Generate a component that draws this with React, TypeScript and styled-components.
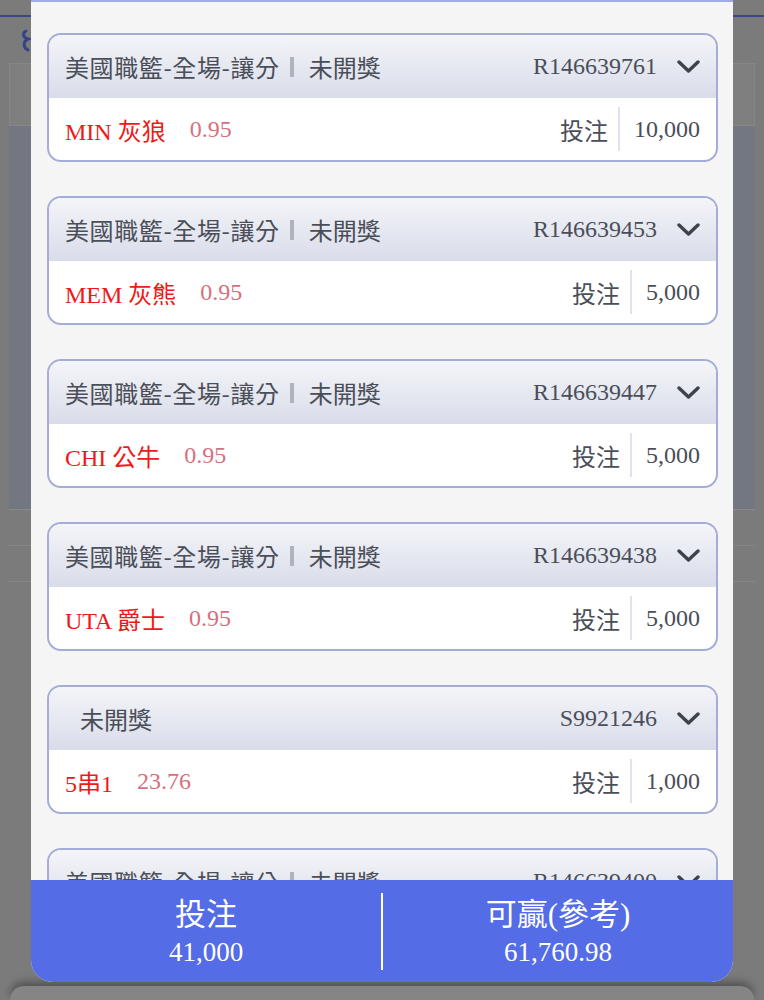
import React from 'react';
import styled, { createGlobalStyle } from 'styled-components';

const GlobalStyle = createGlobalStyle`
  html, body {
    margin: 0;
    padding: 0;
    background: #7b7b7b;
    overflow: hidden;
  }
  * { box-sizing: border-box; }
`;

const SANS = `"Noto Sans CJK TC", "Noto Sans", sans-serif`;
const SERIF = `"Liberation Serif", "Noto Sans CJK TC", serif`;

// dimmed page that sits behind the overlay
const BackPage = styled.div`
  height: 1000px;
  display: flex;
  flex-direction: column;
`;

const BackTopBar = styled.div`
  height: 17px;
  border-bottom: 2px solid #3b4784;
`;

const BackLogoRow = styled.div`
  height: 46px;
  display: flex;
  align-items: center;
  padding-left: 20px;
`;

const BackFilter = styled.div`
  margin: 0 9px;
  height: 63px;
  background: #7f7f80;
  border: 1px solid #878787;
`;

const BackPanel = styled.div`
  margin: 0 9px;
  height: 384px;
  background: #737781;
  border-bottom: 1px solid #8a8a8a;
`;

const BackRow = styled.div`
  margin: 0 9px;
  height: 36px;
  border-bottom: 1px solid #868686;
`;

const BackSpacer = styled.div`
  flex: 1;
`;

const BackSheet = styled.div`
  margin: 0 10px;
  height: 14px;
  background: #858585;
  border-radius: 22px 22px 0 0;
  box-shadow: 0 -4px 8px rgba(0, 0, 0, 0.35);
`;

// overlay modal
const Modal = styled.div`
  position: fixed;
  left: 31px;
  width: 702px;
  top: 0;
  bottom: 18px;
  background: #f5f5f5;
  border-top: 2px solid #9eace8;
  border-radius: 0 0 22px 22px;
  overflow: hidden;
  display: flex;
  flex-direction: column;
`;

const List = styled.div`
  flex: 1;
  overflow: hidden;
  padding: 31px 15px 0 16px;
  display: flex;
  flex-direction: column;
  gap: 34px;
`;

const Card = styled.div`
  flex-shrink: 0;
  border: 2px solid #a5acd7;
  border-radius: 14px;
  overflow: hidden;
  background: #fff;
`;

const CardHead = styled.div<{ $indent?: boolean }>`
  height: 63px;
  display: flex;
  align-items: center;
  padding: 0 16px 0 ${(p) => (p.$indent ? 31 : 16)}px;
  background: linear-gradient(#f4f5f9, #d9dce9);
  color: #4a4e58;
`;

const League = styled.span`
  font-family: ${SANS};
  font-size: 24px;
  letter-spacing: 0.6px;
`;

const Bar = styled.span`
  width: 4px;
  height: 20px;
  margin: 0 15px 0 10px;
  background: #b0b3bb;
`;

const Status = styled.span`
  font-family: ${SANS};
  font-size: 24px;
`;

const OrderNo = styled.span`
  margin-left: auto;
  font-family: ${SERIF};
  font-size: 24px;
  color: #4a4e58;
`;

const Chevron = styled.svg`
  margin-left: 20px;
  width: 23px;
  height: 14px;
`;

const CardBody = styled.div`
  height: 62px;
  display: flex;
  align-items: center;
  padding: 0 16px;
`;

const Pick = styled.span`
  font-family: ${SERIF};
  font-size: 24px;
  color: #f01818;
`;

const Odds = styled.span`
  margin-left: 24px;
  font-family: ${SERIF};
  font-size: 24px;
  color: #d7707e;
`;

const StakeLabel = styled.span`
  margin-left: auto;
  font-family: ${SANS};
  font-size: 24px;
  color: #4a4e58;
`;

const StakeSep = styled.span`
  width: 2px;
  height: 44px;
  margin: 0 14px 0 10px;
  background: #dde1f2;
`;

const StakeValue = styled.span`
  font-family: ${SERIF};
  font-size: 24px;
  color: #4a4e58;
`;

const Footer = styled.div`
  flex-shrink: 0;
  height: 102px;
  background: #546ce6;
  display: grid;
  grid-template-columns: 1fr 2px 1fr;
  align-items: start;
  color: #fff;
`;

const FooterCol = styled.div`
  display: flex;
  flex-direction: column;
  align-items: center;
  padding-top: 17px;
`;

const FooterLabel = styled.div`
  font-family: ${SERIF};
  font-size: 31px;
  line-height: 36px;
`;

const FooterValue = styled.div`
  margin-top: 2px;
  font-family: ${SERIF};
  font-size: 27px;
  line-height: 34px;
`;

const FooterSep = styled.div`
  margin-top: 13px;
  height: 77px;
  background: #fff;
`;

type Bet = {
  league?: string;
  no: string;
  pick: string;
  odds: string;
  stake: string;
};

const bets: Bet[] = [
  { league: '美國職籃-全場-讓分', no: 'R146639761', pick: 'MIN 灰狼', odds: '0.95', stake: '10,000' },
  { league: '美國職籃-全場-讓分', no: 'R146639453', pick: 'MEM 灰熊', odds: '0.95', stake: '5,000' },
  { league: '美國職籃-全場-讓分', no: 'R146639447', pick: 'CHI 公牛', odds: '0.95', stake: '5,000' },
  { league: '美國職籃-全場-讓分', no: 'R146639438', pick: 'UTA 爵士', odds: '0.95', stake: '5,000' },
  { no: 'S9921246', pick: '5串1', odds: '23.76', stake: '1,000' },
  { league: '美國職籃-全場-讓分', no: 'R146639400', pick: 'DEN 金塊', odds: '0.95', stake: '5,000' },
];

function BetCard({ bet }: { bet: Bet }) {
  return (
    <Card>
      <CardHead $indent={!bet.league}>
        {bet.league && (
          <>
            <League>{bet.league}</League>
            <Bar />
          </>
        )}
        <Status>未開獎</Status>
        <OrderNo>{bet.no}</OrderNo>
        <Chevron viewBox="0 0 23 14">
          <polyline points="2,2 11.5,11 21,2" fill="none" stroke="#3f424b" strokeWidth="3.4" strokeLinecap="round" strokeLinejoin="round" />
        </Chevron>
      </CardHead>
      <CardBody>
        <Pick>{bet.pick}</Pick>
        <Odds>{bet.odds}</Odds>
        <StakeLabel>投注</StakeLabel>
        <StakeSep />
        <StakeValue>{bet.stake}</StakeValue>
      </CardBody>
    </Card>
  );
}

export default function App() {
  return (
    <>
      <GlobalStyle />
      <BackPage>
        <BackTopBar />
        <BackLogoRow>
          <svg width="22" height="26" viewBox="0 0 22 26">
            <path d="M6 4 C 2 6, 3 11, 8 12 C 3 14, 3 21, 8 23" fill="none" stroke="#34448a" strokeWidth="3" strokeLinecap="round" />
          </svg>
        </BackLogoRow>
        <BackFilter />
        <BackPanel />
        <BackRow />
        <BackRow />
        <BackSpacer />
        <BackSheet />
      </BackPage>
      <Modal>
        <List>
          {bets.map((b) => (
            <BetCard key={b.no} bet={b} />
          ))}
        </List>
        <Footer>
          <FooterCol>
            <FooterLabel>投注</FooterLabel>
            <FooterValue>41,000</FooterValue>
          </FooterCol>
          <FooterSep />
          <FooterCol>
            <FooterLabel>可贏(參考)</FooterLabel>
            <FooterValue>61,760.98</FooterValue>
          </FooterCol>
        </Footer>
      </Modal>
    </>
  );
}
